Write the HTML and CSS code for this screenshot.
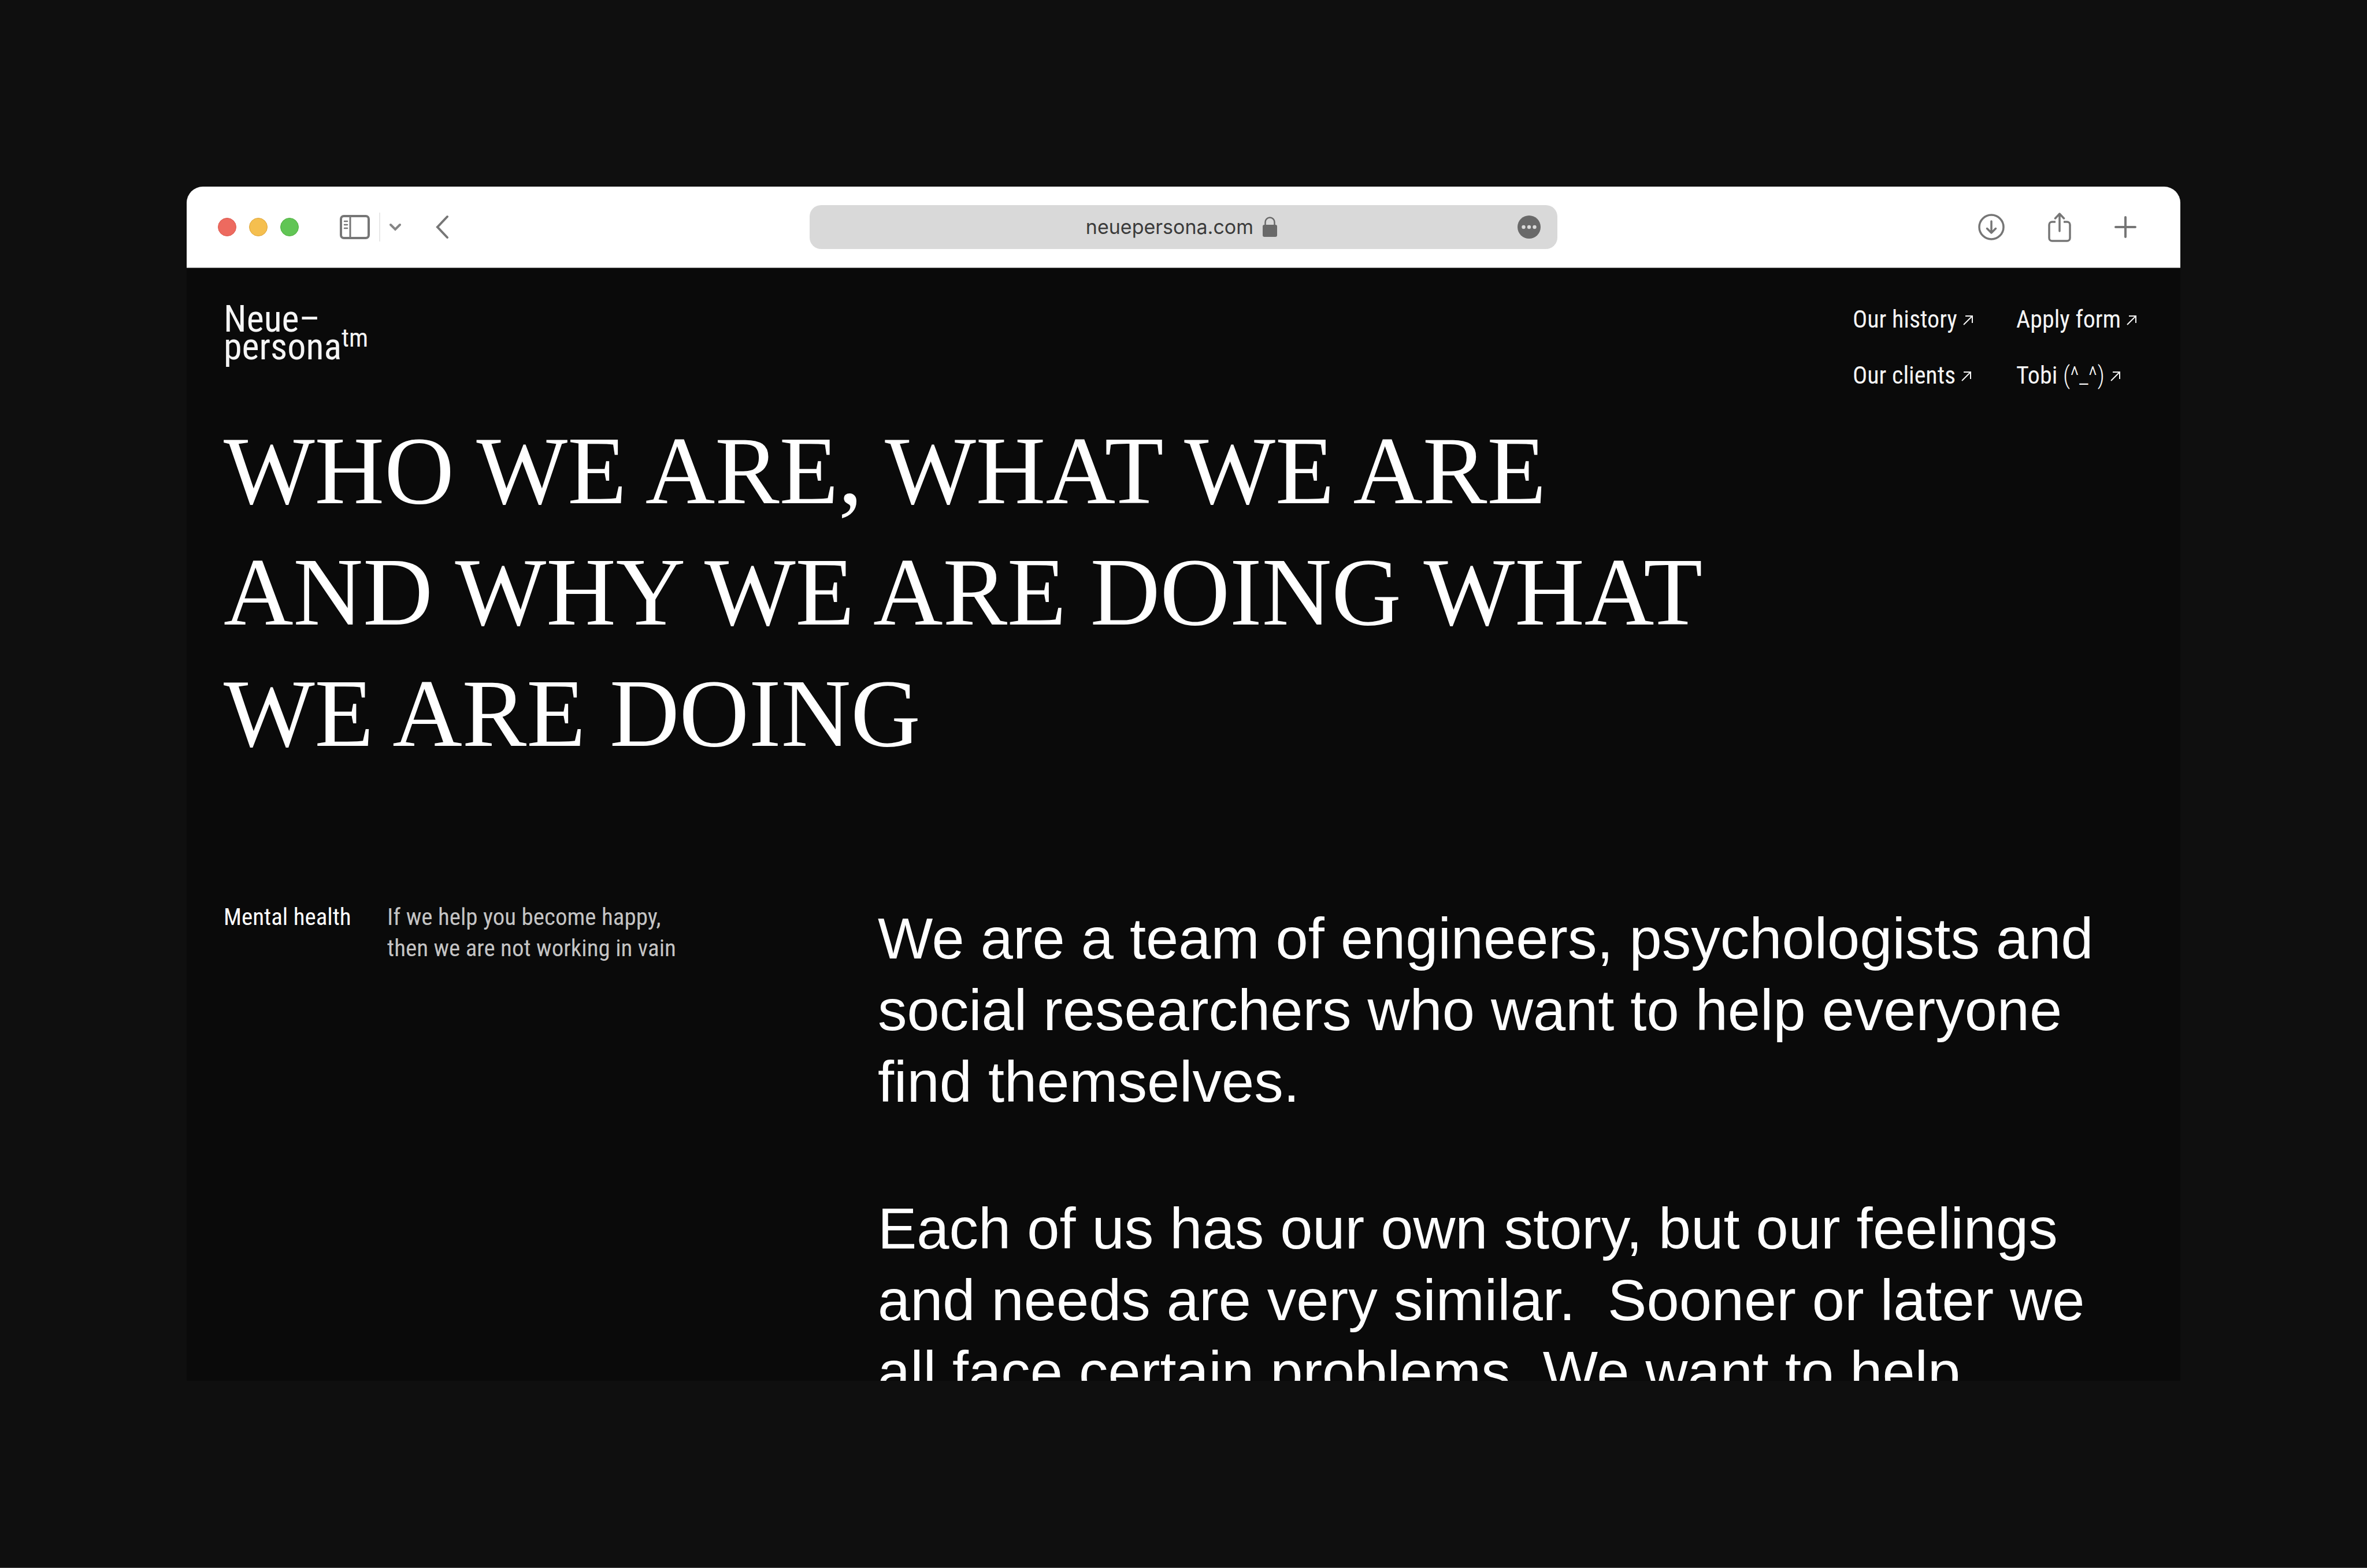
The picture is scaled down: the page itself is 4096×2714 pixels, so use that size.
FILE: index.html
```html
<!DOCTYPE html>
<html lang="en">
<head>
<meta charset="utf-8">
<title>Neue–persona</title>
<link rel="stylesheet" href="styles.css">
</head>
<body class="desktop">
<div class="browser">
  <div class="toolbar">
    <div class="toolbar-left">
      <div class="lights">
        <button class="light light-close" aria-label="Close"></button>
        <button class="light light-minimise" aria-label="Minimise"></button>
        <button class="light light-zoom" aria-label="Zoom"></button>
      </div>
      <div class="sidebar-group">
        <button class="tool" aria-label="Sidebar">
          <svg width="52" height="42" viewBox="0 0 52 42" fill="none" stroke="#767676" stroke-width="4"><rect x="2" y="2" width="48" height="38" rx="5"/><path d="M18 2v38" stroke-width="3"/><path d="M8 11h5M8 17h5M8 23h5" stroke-width="2.5" stroke-linecap="round"/></svg>
        </button>
        <span class="divider"></span>
        <button class="tool" aria-label="Tab groups">
          <svg width="20" height="14" viewBox="0 0 20 14" fill="none" stroke="#858585" stroke-width="4" stroke-linecap="round"><path d="M2 3l8 8 8-8"/></svg>
        </button>
      </div>
      <button class="tool" aria-label="Back">
        <svg width="24" height="42" viewBox="0 0 24 42" fill="none" stroke="#767676" stroke-width="4" stroke-linecap="round"><path d="M21 3L4 21l17 18"/></svg>
      </button>
    </div>
    <div class="address">
      <label class="address-field"><input class="address-input" type="text" value="neuepersona.com" aria-label="Address">
        <svg width="26" height="36" viewBox="0 0 26 36"><rect x="0" y="14" width="25" height="21" rx="3" fill="#696969"/><path d="M4.500 15V9.500a8 8 0 0 1 16 0V15" fill="none" stroke="#696969" stroke-width="2.500"/></svg>
      </label>
      <button class="tool address-more" aria-label="Page menu">
        <svg width="40" height="40" viewBox="0 0 40 40"><circle cx="20" cy="20" r="20" fill="#696969"/><g fill="#d9d9d9"><circle cx="10.500" cy="20" r="3.200"/><circle cx="20" cy="20" r="3.200"/><circle cx="29.500" cy="20" r="3.200"/></g></svg>
      </button>
    </div>
    <div class="toolbar-right">
      <button class="tool" aria-label="Downloads">
        <svg width="46" height="46" viewBox="0 0 46 46" fill="none" stroke="#767676" stroke-width="3.500" stroke-linecap="round" stroke-linejoin="round"><circle cx="23" cy="23" r="21"/><path d="M23 13v20M15.500 25.500L23 33l7.500-7.500"/></svg>
      </button>
      <button class="tool" aria-label="Share">
        <svg width="40" height="52" viewBox="0 0 40 52" fill="none" stroke="#767676" stroke-width="3.500" stroke-linecap="round" stroke-linejoin="round"><path d="M13 17H7a5 5 0 0 0-5 5v23a5 5 0 0 0 5 5h26a5 5 0 0 0 5-5V22a5 5 0 0 0-5-5h-6" stroke-linecap="butt"/><path d="M20 33V3M12.500 11L20 3l7.500 8"/></svg>
      </button>
      <button class="tool" aria-label="New tab">
        <svg width="38" height="38" viewBox="0 0 38 38" fill="none" stroke="#767676" stroke-width="4" stroke-linecap="round"><path d="M19 2v34M2 19h34"/></svg>
      </button>
    </div>
  </div>

  <div class="page">
    <header class="site-header">
      <a class="logo" href="#">Neue–<br>persona<span class="logo-mark">tm</span></a>
      <nav class="nav">
        <a class="nav-link" href="#">Our history<svg class="arrow" viewBox="0 0 18 18"><path d="M1 17L16 2M4 2h12v12"/></svg></a>
        <a class="nav-link" href="#">Apply form<svg class="arrow" viewBox="0 0 18 18"><path d="M1 17L16 2M4 2h12v12"/></svg></a>
        <a class="nav-link" href="#">Our clients<svg class="arrow" viewBox="0 0 18 18"><path d="M1 17L16 2M4 2h12v12"/></svg></a>
        <a class="nav-link" href="#"><span>Tobi <span class="face">(^_^)</span></span><svg class="arrow" viewBox="0 0 18 18"><path d="M1 17L16 2M4 2h12v12"/></svg></a>
      </nav>
    </header>

    <h1 class="headline">WHO WE ARE, WHAT WE ARE<br>AND WHY WE ARE DOING WHAT<br>WE ARE DOING</h1>

    <section class="about">
      <h2 class="topic">Mental health</h2>
      <p class="topic-note">If we help you become happy,<br>then we are not working in vain</p>
      <div class="story">
        <p>We are a team of engineers, psychologists and<br>social researchers who want to help everyone<br>find themselves.</p>
        <p>Each of us has our own story, but our feelings<br>and needs are very similar.&nbsp; Sooner or later we<br>all face certain problems. We want to help</p>
      </div>
    </section>
  </div>
</div>
</body>
</html>
```
FILE: styles.css
```css
* {
  box-sizing: border-box;
}

h1, h2, p {
  margin: 0;
  font-weight: 400;
}

a {
  color: inherit;
  text-decoration: none;
}

svg {
  display: block;
}

.desktop {
  display: flex;
  height: 100vh;
  margin: 0;
  padding: 323px;
  overflow: hidden;
  border-bottom: 1px solid #4a4a4a;
  background: #0f0f0f;
  color: #fff;
  font-family: "Liberation Sans", Arial, sans-serif;
}

.browser {
  display: flex;
  flex: 1;
  flex-direction: column;
  min-width: 0;
  min-height: 0;
  overflow: hidden;
  border-radius: 28px 28px 0 0;
  background: #0a0a0a;
}

/* Browser toolbar */

.toolbar {
  display: grid;
  flex: none;
  grid-template-columns: 1fr 37.5% 1fr;
  align-items: center;
  height: 141px;
  border-bottom: 1px solid #8a8a8a;
  background: #fff;
}

.tool {
  padding: 0;
  border: 0;
  background: none;
}

.toolbar-left {
  display: flex;
  align-items: center;
  gap: 59px;
  padding-left: 54px;
}

.lights {
  display: flex;
  gap: 22px;
  margin-right: 12px;
}

.light {
  width: 32px;
  height: 32px;
  padding: 0;
  border: 1px solid;
  border-radius: 50%;
}

.light-close {
  border-color: #dc5a50;
  background: #ed6a5f;
}

.light-minimise {
  border-color: #dfa63c;
  background: #f5bf4f;
}

.light-zoom {
  border-color: #53b043;
  background: #61c555;
}

.sidebar-group {
  display: flex;
  align-items: center;
  gap: 16px;
}

.divider {
  width: 2px;
  height: 50px;
  background: #e8e8e8;
}

.address {
  display: grid;
  grid-template-columns: 1fr auto 1fr;
  align-items: center;
  height: 76px;
  padding: 0 29px;
  border-radius: 20px;
  background: #d9d9d9;
}

.address-field {
  display: flex;
  grid-column: 2;
  align-items: center;
  gap: 16px;
  padding-right: 12px;
}

.address-input {
  width: 296px;
  padding: 0;
  border: 0;
  outline: 0;
  background: none;
  color: #3b3b3b;
  font: 34px/48px Inter, "Liberation Sans", sans-serif;
  text-align: right;
}

.address-more {
  justify-self: end;
}

.toolbar-right {
  display: flex;
  align-items: center;
  justify-content: flex-end;
  gap: 75px;
  padding-right: 76px;
}

/* Site */

.page {
  flex: 1;
  min-height: 0;
  padding: 60px 64px 0;
  overflow: hidden;
}

.site-header {
  display: flex;
  align-items: flex-start;
  justify-content: space-between;
  height: 186px;
  font-family: "Roboto Condensed", "Liberation Sans Narrow", "Liberation Sans", sans-serif;
}

.logo {
  padding-top: 5px;
  color: #f5f5f5;
  font-size: 64px;
  line-height: 48px;
}

.logo-mark {
  font-size: 44px;
  line-height: 0;
  vertical-align: 22px;
}

.nav {
  display: grid;
  grid-template-columns: 283px 220px;
  row-gap: 43px;
  padding-top: 2px;
  color: #f5f5f5;
  font-size: 42px;
  line-height: 54px;
}

.nav-link {
  display: flex;
  align-items: baseline;
  gap: 10px;
  white-space: nowrap;
}

.face {
  font-weight: 300;
}

.arrow {
  width: 18px;
  height: 22px;
  padding-bottom: 4px;
  fill: none;
  stroke: #f5f5f5;
  stroke-width: 2;
}

.headline {
  font-family: "Liberation Serif", "Times New Roman", serif;
  font-size: 167px;
  line-height: 210px;
  white-space: nowrap;
}

.about {
  display: grid;
  grid-template-columns: 283px 849px 1fr;
  align-items: start;
  padding-top: 210px;
}

.topic,
.topic-note {
  padding-top: 10px;
  font-family: "Roboto Condensed", "Liberation Sans Narrow", "Liberation Sans", sans-serif;
  font-size: 41px;
  line-height: 54px;
  white-space: nowrap;
}

.topic-note {
  color: #c4c4c4;
}

.story {
  display: grid;
  gap: 130px;
  padding-top: 12px;
  font-size: 101px;
  line-height: 124px;
  white-space: nowrap;
}
```
